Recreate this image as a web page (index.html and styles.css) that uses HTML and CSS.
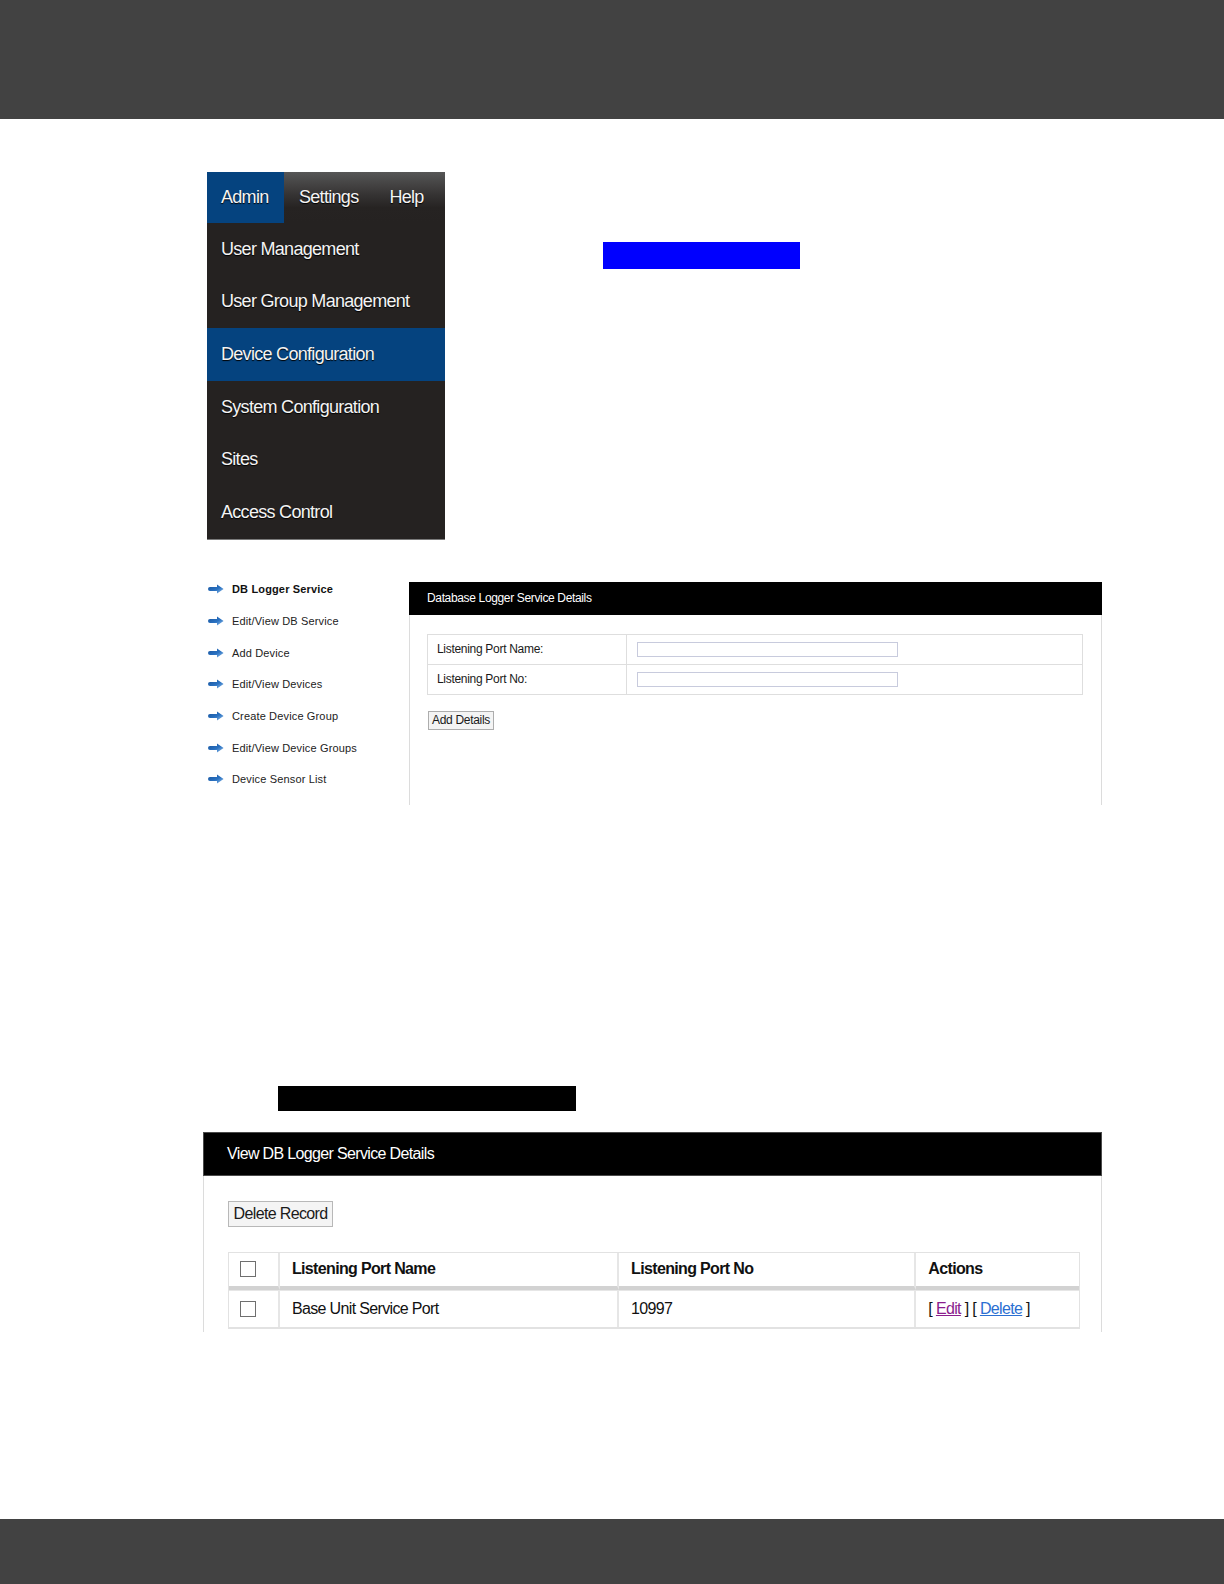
FILE: index.html
```html
<!DOCTYPE html>
<html lang="en">
<head>
<meta charset="utf-8">
<title>DB Logger Service</title>
<link rel="stylesheet" href="styles.css">
</head>
<body>
<div class="page">
  <header class="topbar"></header>

  <main class="content">
    <section class="top">
      <nav class="menu">
        <div class="menu-tabs">
          <span class="tab tab-active">Admin</span>
          <span class="tab">Settings</span>
          <span class="tab">Help</span>
        </div>
        <ul class="menu-list">
          <li class="menu-item">User Management</li>
          <li class="menu-item">User Group Management</li>
          <li class="menu-item menu-item-active">Device Configuration</li>
          <li class="menu-item">System Configuration</li>
          <li class="menu-item">Sites</li>
          <li class="menu-item">Access Control</li>
        </ul>
      </nav>
      <div class="blue-mark"></div>
    </section>

    <section class="mid">
      <ul class="subnav">
        <li class="subnav-item subnav-current"><svg class="arrow" viewBox="0 0 16 10"><defs><linearGradient id="ag" x1="0" y1="0" x2="1" y2="1"><stop offset="0" stop-color="#17539c"/><stop offset="0.55" stop-color="#2a72c2"/><stop offset="1" stop-color="#9cc4ec"/></linearGradient></defs><path d="M2 3 H9 V0.4 L15.6 5 L9 9.6 V7 H2 A2 2 0 0 1 2 3 Z" fill="url(#ag)"/></svg>DB Logger Service</li>
        <li class="subnav-item"><svg class="arrow" viewBox="0 0 16 10"><path d="M2 3 H9 V0.4 L15.6 5 L9 9.6 V7 H2 A2 2 0 0 1 2 3 Z" fill="url(#ag)"/></svg>Edit/View DB Service</li>
        <li class="subnav-item"><svg class="arrow" viewBox="0 0 16 10"><path d="M2 3 H9 V0.4 L15.6 5 L9 9.6 V7 H2 A2 2 0 0 1 2 3 Z" fill="url(#ag)"/></svg>Add Device</li>
        <li class="subnav-item"><svg class="arrow" viewBox="0 0 16 10"><path d="M2 3 H9 V0.4 L15.6 5 L9 9.6 V7 H2 A2 2 0 0 1 2 3 Z" fill="url(#ag)"/></svg>Edit/View Devices</li>
        <li class="subnav-item"><svg class="arrow" viewBox="0 0 16 10"><path d="M2 3 H9 V0.4 L15.6 5 L9 9.6 V7 H2 A2 2 0 0 1 2 3 Z" fill="url(#ag)"/></svg>Create Device Group</li>
        <li class="subnav-item"><svg class="arrow" viewBox="0 0 16 10"><path d="M2 3 H9 V0.4 L15.6 5 L9 9.6 V7 H2 A2 2 0 0 1 2 3 Z" fill="url(#ag)"/></svg>Edit/View Device Groups</li>
        <li class="subnav-item"><svg class="arrow" viewBox="0 0 16 10"><path d="M2 3 H9 V0.4 L15.6 5 L9 9.6 V7 H2 A2 2 0 0 1 2 3 Z" fill="url(#ag)"/></svg>Device Sensor List</li>
      </ul>

      <div class="panel panel-small">
        <div class="panel-head panel-head-small">Database Logger Service Details</div>
        <div class="panel-body panel-body-small">
          <table class="form-table">
            <tr>
              <td class="form-label">Listening Port Name:</td>
              <td class="form-field"><input class="text-input" type="text"></td>
            </tr>
            <tr>
              <td class="form-label">Listening Port No:</td>
              <td class="form-field"><input class="text-input" type="text"></td>
            </tr>
          </table>
          <button class="btn btn-small" type="button">Add Details</button>
        </div>
      </div>
    </section>

    <div class="black-mark"></div>

    <section class="panel panel-large">
      <div class="panel-head panel-head-large">View DB Logger Service Details</div>
      <div class="panel-body panel-body-large">
        <button class="btn btn-large" type="button">Delete Record</button>
        <table class="data-table">
          <thead>
            <tr>
              <th class="col-check"><input class="check" type="checkbox"></th>
              <th class="col-name">Listening Port Name</th>
              <th class="col-port">Listening Port No</th>
              <th class="col-actions">Actions</th>
            </tr>
          </thead>
          <tbody>
            <tr>
              <td class="col-check"><input class="check" type="checkbox"></td>
              <td>Base Unit Service Port</td>
              <td>10997</td>
              <td>[ <a class="link-edit" href="#">Edit</a> ] [ <a class="link-delete" href="#">Delete</a> ]</td>
            </tr>
          </tbody>
        </table>
      </div>
    </section>
  </main>

  <footer class="footbar"></footer>
</div>
</body>
</html>
```

FILE: styles.css
```css
* { box-sizing: border-box; }

html, body {
  margin: 0;
  padding: 0;
  background: #ffffff;
}

body {
  font-family: "Liberation Sans", Arial, sans-serif;
  color: #111111;
}

.page {
  min-height: 1584px;
  display: flex;
  flex-direction: column;
}

.topbar {
  height: 119px;
  background: #424242;
  flex: 0 0 auto;
}

.footbar {
  height: 65px;
  background: #424242;
  margin-top: auto;
  flex: 0 0 auto;
}

.content {
  margin-left: 203px;
  width: 899px;
}

/* ---------- top: main menu ---------- */
.top {
  display: flex;
  align-items: flex-start;
  margin-top: 53px;
  padding-left: 4px;
}

.menu {
  width: 238px;
  background: #252221;
  border-bottom: 1px solid #7a7a7a;
  font-size: 18px;
  letter-spacing: -0.7px;
  color: #f4f4f4;
  text-shadow: 0 1px 1px #000000;
}

.menu-tabs {
  display: flex;
  height: 51px;
  background: linear-gradient(to bottom, #565656 0%, #353333 45%, #262322 70%, #252221 100%);
}

.tab {
  display: flex;
  align-items: center;
  padding: 0 14px 0 14px;
  height: 51px;
}

.tab-active {
  width: 77px;
  background: #05437f;
}

.tab + .tab { padding-left: 15px; padding-right: 16px; }

.menu-list {
  list-style: none;
  margin: 0;
  padding: 0;
}

.menu-item {
  height: 52.6px;
  display: flex;
  align-items: center;
  padding-left: 14px;
}

.menu-item-active {
  background: #05437f;
}

.blue-mark {
  width: 197px;
  height: 27px;
  background: #0000ff;
  margin-top: 70px;
  margin-left: 158px;
}

/* ---------- middle: sub nav + add form ---------- */
.mid {
  display: flex;
  align-items: flex-start;
  margin-top: 34px;
  padding-left: 4px;
}

.subnav {
  list-style: none;
  margin: 0;
  padding: 0;
  width: 202px;
  font-size: 11px;
  letter-spacing: 0.15px;
  color: #222222;
}

.subnav-item {
  height: 31.65px;
  display: flex;
  align-items: center;
  white-space: nowrap;
}

.subnav-current {
  font-weight: bold;
  color: #111111;
}

.arrow {
  width: 16px;
  height: 10px;
  margin: 0 8px 0 1px;
  flex: 0 0 auto;
}

.panel-small {
  width: 693px;
  margin-top: 8px;
}

.panel-head {
  background: #000000;
  color: #ffffff;
  display: flex;
  align-items: center;
}

.panel-head-small {
  height: 33px;
  padding-left: 18px;
  font-size: 12px;
  letter-spacing: -0.35px;
}

.panel-body {
  border-left: 1px solid #dcdcdc;
  border-right: 1px solid #dcdcdc;
}

.panel-body-small {
  height: 190px;
  padding: 19px 18px 0 17px;
}

.form-table {
  width: 656px;
  border-collapse: collapse;
  font-size: 12px;
  letter-spacing: -0.3px;
  color: #1a1a1a;
}

.form-table td {
  border: 1px solid #dedede;
  height: 30px;
  padding: 0;
}

.form-label {
  width: 199px;
  padding-left: 9px !important;
}

.form-field {
  padding-left: 10px !important;
}

.text-input {
  display: block;
  width: 261px;
  height: 15px;
  border: 1px solid #c8cbdd;
  padding: 0;
  margin: 0;
  background: #ffffff;
}

.btn {
  font-family: "Liberation Sans", Arial, sans-serif;
  background: #f4f4f4;
  border: 1px solid #adadad;
  color: #1a1a1a;
  padding: 0;
  margin: 0;
  display: block;
}

.btn-small {
  margin-top: 16px;
  margin-left: 1px;
  width: 66px;
  height: 19px;
  font-size: 12px;
  letter-spacing: -0.3px;
}

.black-mark {
  width: 298px;
  height: 25px;
  background: #000000;
  margin-top: 281px;
  margin-left: 75px;
}

/* ---------- bottom: listing panel ---------- */
.panel-large {
  margin-top: 21px;
  width: 899px;
}

.panel-head-large {
  height: 44px;
  padding-left: 23px;
  font-size: 16px;
  letter-spacing: -0.65px;
  border: 1px solid #4a4a4a;
}

.panel-body-large {
  padding: 25px 23px 3px 24px;
}

.btn-large {
  width: 105px;
  height: 26px;
  font-size: 16px;
  letter-spacing: -0.65px;
  border-color: #b8b8b8;
}

.data-table {
  margin-top: 25px;
  width: 852px;
  border-collapse: separate;
  border-spacing: 0;
  border: 1px solid #e2e2e2;
  border-bottom-width: 2px;
  font-size: 16px;
  letter-spacing: -0.65px;
  color: #111111;
}

.data-table th,
.data-table td {
  text-align: left;
  padding: 0 0 0 12px;
  border-right: 2px solid #e6e6e6;
}

.data-table th:last-child,
.data-table td:last-child {
  border-right: 0;
}

.data-table th {
  height: 37px;
  font-weight: bold;
  border-bottom: 4px solid #d2d2d2;
  box-shadow: inset 0 -1px 0 #ffffff;
}

.data-table td {
  height: 37px;
  border-top: 1px solid #e6e6e6;
}

.col-check { width: 51px; }
.col-name { width: 340px; }
.col-port { width: 298px; }
.col-actions { width: 163px; }

.data-table .col-check {
  padding-left: 11px;
}

.check {
  appearance: none;
  -webkit-appearance: none;
  display: block;
  width: 16px;
  height: 16px;
  margin: 0;
  border: 1px solid #6f6f6f;
  background: #ffffff;
}

.link-edit {
  color: #8a1d8d;
}

.link-delete {
  color: #2a6fd2;
}
```
